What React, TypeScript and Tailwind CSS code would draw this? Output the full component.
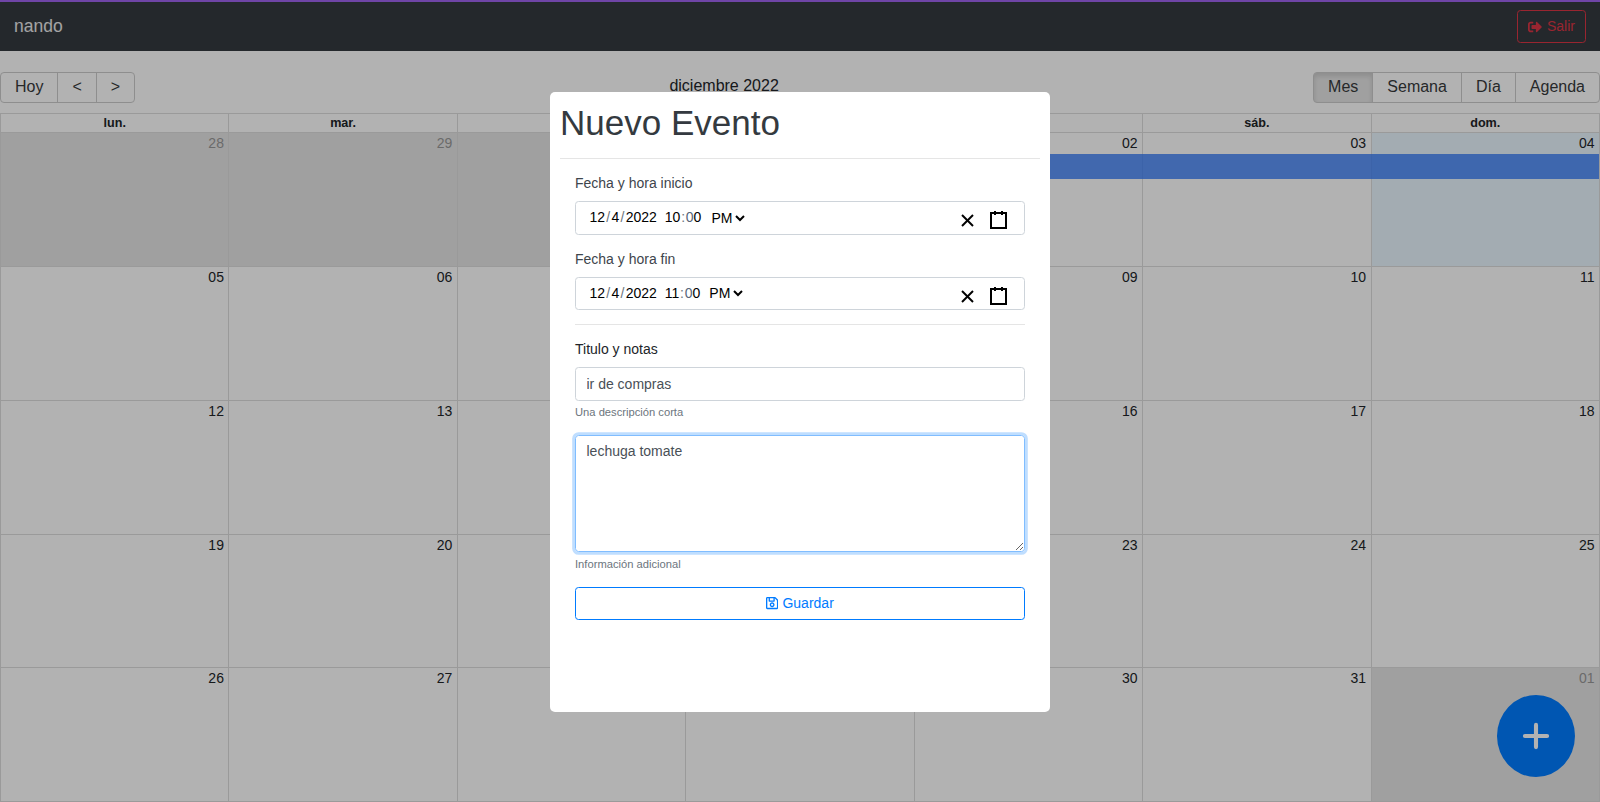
import { FaRegSave, FaSignOutAlt } from "react-icons/fa"
import { Plus } from "lucide-react"

const weekdays = ["lun.", "mar.", "mié.", "jue.", "vie.", "sáb.", "dom."]

const weeks = [
  ["28", "29", "30", "01", "02", "03", "04"],
  ["05", "06", "07", "08", "09", "10", "11"],
  ["12", "13", "14", "15", "16", "17", "18"],
  ["19", "20", "21", "22", "23", "24", "25"],
  ["26", "27", "28", "29", "30", "31", "01"],
]

function isOffRange(week: number, day: number) {
  return (week === 0 && day < 3) || (week === 4 && day === 6)
}

function Toolbar() {
  const btn = "px-[14px] py-[5.25px] border border-[#ccc] -ml-px text-[#373a3c] text-[16px] leading-[18.4px]"
  return (
    <div className="flex items-center justify-between mb-[10px] h-[31px]">
      <div className="flex">
        <button className={btn + " ml-0 rounded-l-[4px]"}>Hoy</button>
        <button className={btn}>&lt;</button>
        <button className={btn + " rounded-r-[4px]"}>&gt;</button>
      </div>
      <span className="text-[16px] text-[#212529] -mt-[4px]">diciembre 2022</span>
      <div className="flex">
        <button className={btn + " ml-0 rounded-l-[4px] bg-[#e6e6e6] border-[#adadad] shadow-[inset_0_3px_5px_rgba(0,0,0,0.125)]"}>
          Mes
        </button>
        <button className={btn}>Semana</button>
        <button className={btn}>Día</button>
        <button className={btn + " rounded-r-[4px]"}>Agenda</button>
      </div>
    </div>
  )
}

function Calendar() {
  return (
    <div className="flex-1 flex flex-col border-l border-y border-[#ddd] min-h-0">
      <div className="grid grid-cols-7 h-[19px] border-b border-[#ddd]">
        {weekdays.map((d) => (
          <div key={d} className="text-center text-[12.6px] leading-[18px] font-bold text-[#212529] border-r border-[#ddd]">
            {d}
          </div>
        ))}
      </div>
      <div className="flex-1 grid grid-rows-[133px_1fr_1fr_1fr_1fr] min-h-0">
        {weeks.map((week, w) => (
          <div key={w} className={"relative grid grid-cols-7 " + (w > 0 ? "border-t border-[#ddd]" : "")}>
            {week.map((day, i) => (
              <div
                key={i}
                className={
                  "text-right pr-[4.5px] text-[14px] leading-[21px] border-r border-[#ddd] " +
                  (isOffRange(w, i)
                    ? "bg-[#e6e6e6] text-[#999]"
                    : w === 0 && i === 6
                      ? "bg-[#eaf6ff] text-[#212529]"
                      : "text-[#212529]")
                }
              >
                {day}
              </div>
            ))}
            {w === 0 && (
              <div className="absolute top-[21px] left-[62%] right-[1px] h-[25px] bg-[#367cf7]/80" />
            )}
          </div>
        ))}
      </div>
    </div>
  )
}

function DateTimeField({ hour, pmOffset, iconOffset }: { hour: string; pmOffset: string; iconOffset: string }) {
  return (
    <div className="flex items-center h-[33.5px] border border-[#ced4da] rounded-[3.5px] pl-[13.5px] pr-[10px] text-[14px] text-black bg-white">
      <span>12</span>
      <span className="mx-[1.25px] text-[#6c757d]">/</span>
      <span>4</span>
      <span className="mx-[1.25px] text-[#6c757d]">/</span>
      <span>2022</span>
      <span className="ml-[8px]">{hour}</span>
      <span className="mx-[0.75px] text-[#6c757d]">:</span>
      <span className="text-[#56657a]">0</span>
      <span>0</span>
      <select className={"text-[14px] text-black outline-none " + pmOffset} defaultValue="PM">
        <option>AM</option>
        <option>PM</option>
      </select>
      <div className={"ml-auto flex " + iconOffset}>
        <span className="px-[6px]">
          <svg width="19" height="19" viewBox="0 0 19 19" stroke="black" strokeWidth="2">
            <line x1="4" x2="15" y1="4" y2="15" />
            <line x1="15" x2="4" y1="4" y2="15" />
          </svg>
        </span>
        <span className="px-[6px]">
          <svg width="19" height="19" viewBox="0 0 19 19" stroke="black" strokeWidth="2">
            <rect fill="none" height="15" width="15" x="2" y="2" />
            <line x1="6" x2="6" y1="0" y2="4" />
            <line x1="13" x2="13" y1="0" y2="4" />
          </svg>
        </span>
      </div>
    </div>
  )
}

function EventModal() {
  const label = "block text-[14px] leading-[21px] text-[#3e454c] mb-[7px]"
  const small = "block mt-[3.5px] text-[11.2px] leading-[16.8px] text-[#6c757d]"
  return (
    <div className="fixed inset-0 flex justify-center items-start pt-[92px] bg-black/30">
      <div className="w-[500px] h-[620px] bg-white rounded-[5px] p-[10px]">
        <h1 className="text-[35px] leading-[42px] text-[#343a40]">Nuevo Evento</h1>
        <hr className="mt-[14px] mb-[14px] border-[#e5e5e5]" />
        <form className="px-[15px]">
          <div className="mb-[14px]">
            <label className={label}>Fecha y hora inicio</label>
            <DateTimeField hour="10" pmOffset="ml-[6px]" iconOffset="mt-[5.4px]" />
          </div>
          <div className="mb-[14px]">
            <label className={label}>Fecha y hora fin</label>
            <DateTimeField hour="11" pmOffset="ml-[5px]" iconOffset="mt-[6.6px]" />
          </div>
          <hr className="mt-[14px] mb-[14px] border-[#e5e5e5]" />
          <div className="mb-[14px]">
            <label className="block text-[14px] leading-[21px] text-[#212529] mb-[7px]">Titulo y notas</label>
            <input
              className="block w-full h-[33.5px] px-[10.5px] border border-[#ced4da] rounded-[3.5px] text-[14px] text-[#495057] outline-none"
              defaultValue="ir de compras"
            />
            <small className={small}>Una descripción corta</small>
          </div>
          <div className="mb-[14px]">
            <textarea
              className="block w-full h-[117.5px] px-[10.5px] py-[5.25px] border border-[#80bdff] rounded-[3.5px] text-[14px] leading-[21px] text-[#495057] outline-none shadow-[0_0_0_2.8px_rgba(0,123,255,0.25)]"
              defaultValue="lechuga tomate"
            />
            <small className={small}>Información adicional</small>
          </div>
          <button
            type="button"
            className="flex items-center justify-center gap-[4px] w-full h-[33.5px] border border-[#007bff] rounded-[3.5px] text-[14px] text-[#007bff]"
          >
            <FaRegSave className="w-[12.25px] h-[14px]" />
            Guardar
          </button>
        </form>
      </div>
    </div>
  )
}

export default function App() {
  return (
    <div className="relative h-[802px] flex flex-col overflow-hidden bg-white font-['Liberation_Sans',Arial,sans-serif]">
      <nav className="h-[51px] shrink-0 flex items-center justify-between bg-[#343a40] border-t-2 border-[#9f64f0] pl-[14px] pr-[14px] mb-[21px]">
        <span className="text-[17.5px] text-white/90">nando</span>
        <button className="flex items-center gap-[5px] h-[33.5px] px-[10px] border border-[#dc3545] rounded-[3.5px] text-[14px] text-[#dc3545]">
          <FaSignOutAlt className="w-[14px] h-[14px]" />
          Salir
        </button>
      </nav>
      <div className="flex-1 flex flex-col min-h-0">
        <Toolbar />
        <Calendar />
      </div>
      <button className="absolute right-[25px] bottom-[25px] w-[78px] h-[82px] rounded-[100%] bg-[#007bff] flex items-center justify-center text-white">
        <Plus size={38} strokeWidth={2.6} className="-mt-px" />
      </button>
      <EventModal />
    </div>
  )
}
